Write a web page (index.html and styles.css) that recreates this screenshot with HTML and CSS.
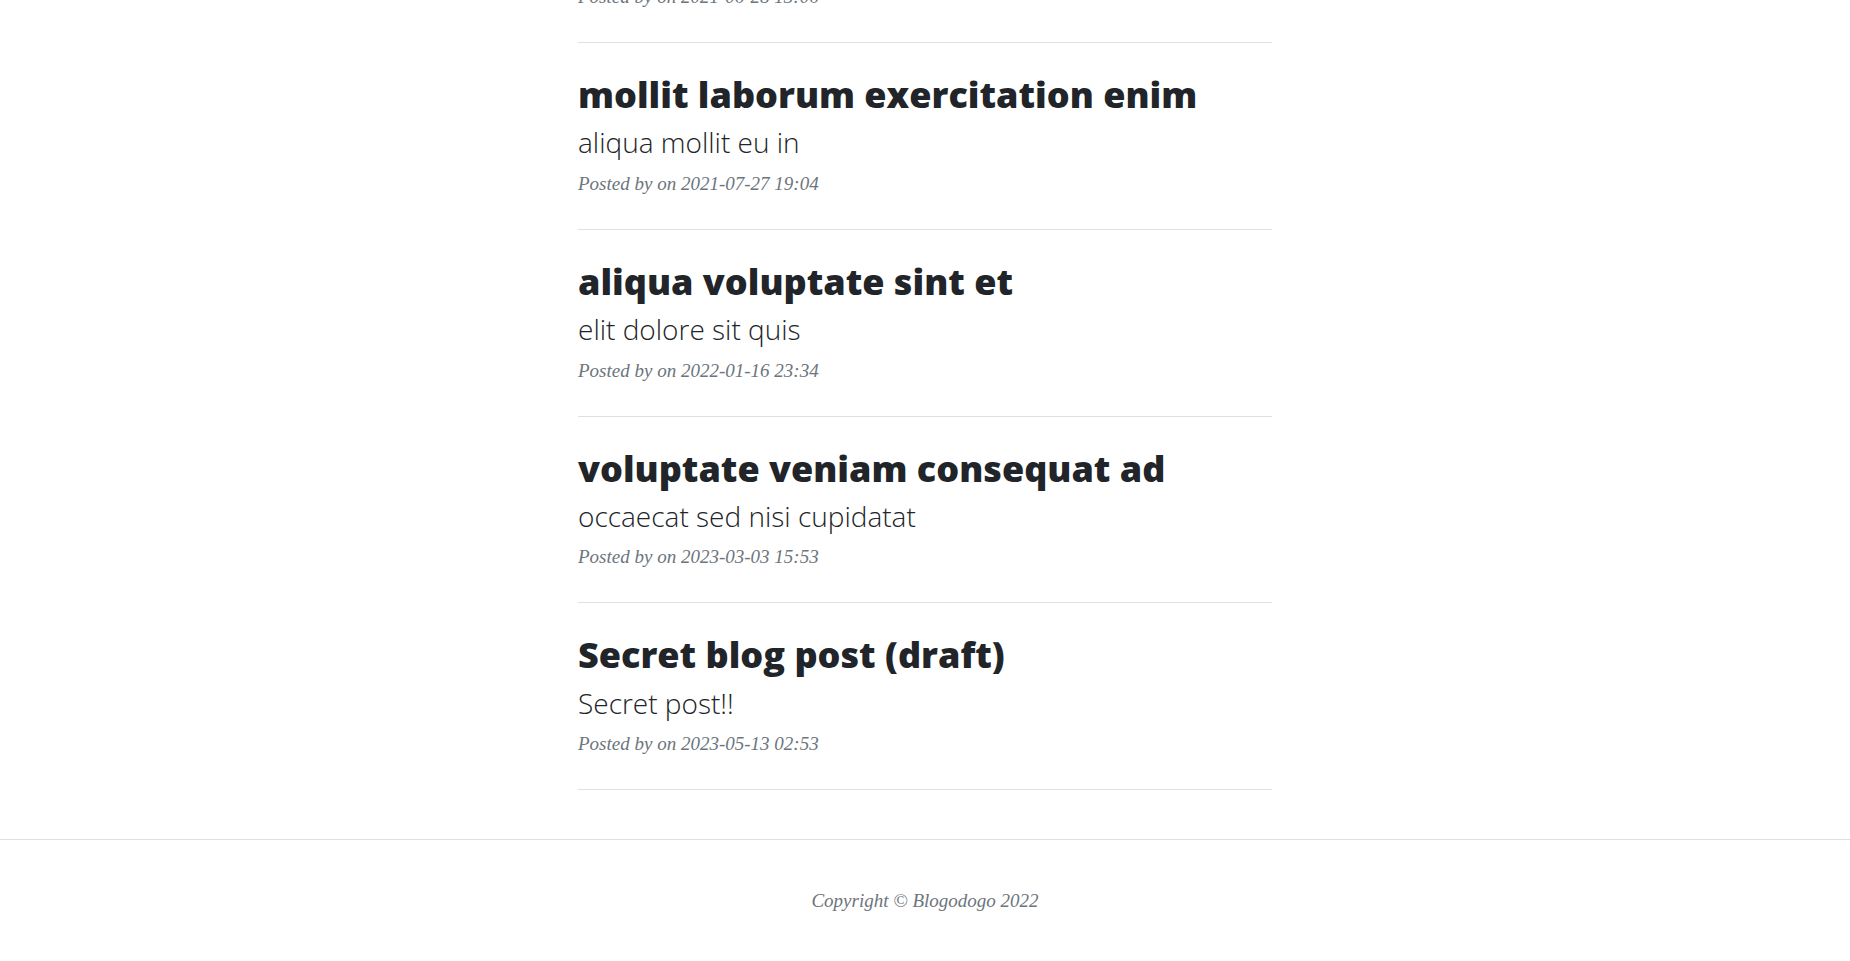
FILE: index.html
```html
<!DOCTYPE html>
<html lang="en">
<head>
<meta charset="utf-8">
<title>Blogodogo</title>
<link rel="stylesheet" href="styles.css">
</head>
<body>
<main class="main">
  <div class="list">
    <p class="post-meta cut">Posted by on 2021-06-28 13:06</p>
    <hr class="divider">

    <div class="post-preview">
      <a class="post-link" href="#">
        <h2 class="post-title">mollit laborum exercitation enim</h2>
        <h3 class="post-subtitle">aliqua mollit eu in</h3>
      </a>
      <p class="post-meta">Posted by on 2021-07-27 19:04</p>
    </div>
    <hr class="divider">

    <div class="post-preview">
      <a class="post-link" href="#">
        <h2 class="post-title">aliqua voluptate sint et</h2>
        <h3 class="post-subtitle">elit dolore sit quis</h3>
      </a>
      <p class="post-meta">Posted by on 2022-01-16 23:34</p>
    </div>
    <hr class="divider">

    <div class="post-preview">
      <a class="post-link" href="#">
        <h2 class="post-title">voluptate veniam consequat ad</h2>
        <h3 class="post-subtitle">occaecat sed nisi cupidatat</h3>
      </a>
      <p class="post-meta">Posted by on 2023-03-03 15:53</p>
    </div>
    <hr class="divider">

    <div class="post-preview">
      <a class="post-link" href="#">
        <h2 class="post-title">Secret blog post (draft)</h2>
        <h3 class="post-subtitle">Secret post!!</h3>
      </a>
      <p class="post-meta">Posted by on 2023-05-13 02:53</p>
    </div>
    <hr class="divider">
  </div>
</main>
<footer class="footer">
  <div class="copyright">Copyright &copy; Blogodogo 2022</div>
</footer>
</body>
</html>
```

FILE: styles.css
```css
html, body {
  margin: 0;
  padding: 0;
  background: #fff;
}

body {
  font-family: "Liberation Serif", "DejaVu Serif", serif;
  font-size: 20px;
  color: #212529;
}

.main {
  display: flex;
  justify-content: center;
  margin-bottom: 25px;
}

.list {
  width: 694px;
  display: flow-root;
}

.divider {
  margin: 24px 0;
  border: 0;
  border-top: 1px solid #dfe0e4;
  height: 0;
}

.post-link {
  color: #212529;
  text-decoration: none;
}

.post-title {
  font-family: "Open Sans", sans-serif;
  font-weight: 800;
  font-size: 36px;
  line-height: 1.2;
  margin: 30px 0 10px;
  color: #212529;
}

.post-subtitle {
  font-family: "Open Sans", sans-serif;
  font-weight: 300;
  font-size: 28px;
  line-height: 1.2;
  margin: 0 0 10px;
  color: #212529;
}

.post-meta {
  font-family: "Liberation Serif", "DejaVu Serif", serif;
  font-style: italic;
  font-size: 19px;
  line-height: 27px;
  color: #6c757d;
  margin: 0 0 32px;
}

.post-meta.cut {
  margin-top: -17px;
}

.footer {
  border-top: 1px solid #dfe0e4;
  padding: 48px 0;
}

.copyright {
  text-align: center;
  font-style: italic;
  font-size: 19px;
  line-height: 26px;
  color: #6c757d;
}
```
